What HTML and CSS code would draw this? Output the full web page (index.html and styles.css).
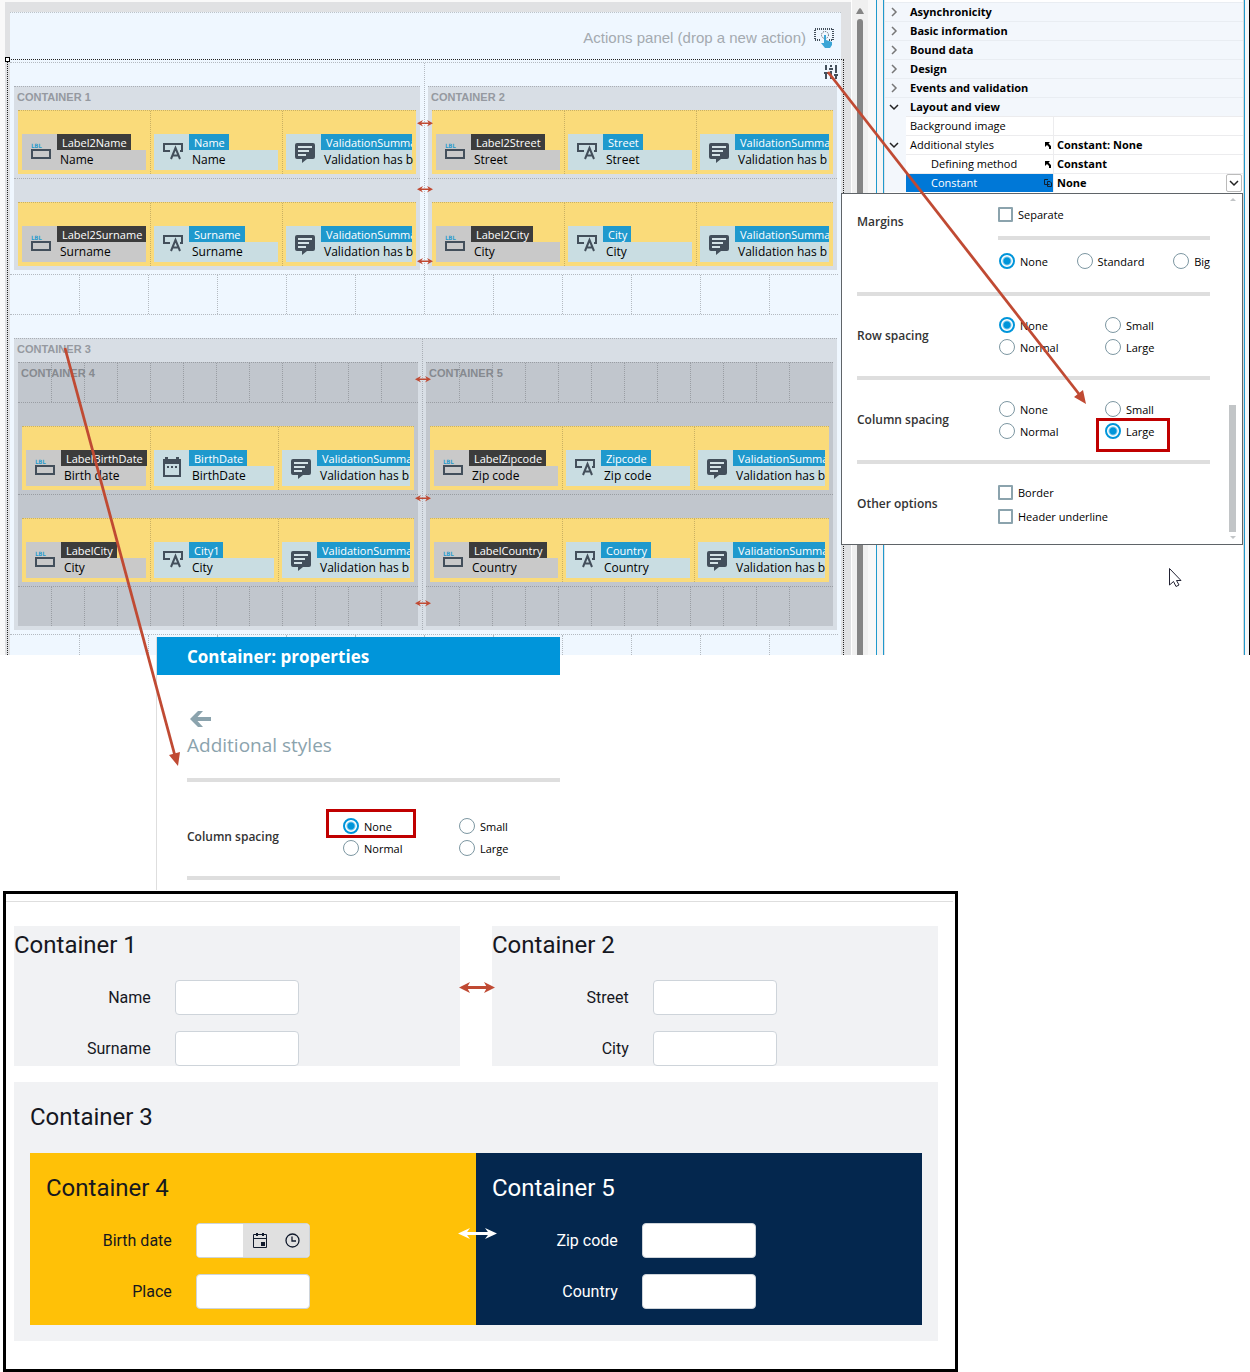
FILE: index.html
```html
<!DOCTYPE html>
<html lang="en">
<head>
<meta charset="utf-8">
<title>Container: column spacing</title>
<link rel="stylesheet" href="styles.css">
</head>
<body>
<svg class="symbols" aria-hidden="true">
  <symbol id="i-label" viewBox="0 0 35 36"><text class="lbl" x="9" y="14">LBL</text><rect x="10" y="16" width="18" height="8" fill="none" stroke="#434f5b" stroke-width="2"/></symbol>
  <symbol id="i-field" viewBox="0 0 35 36"><path d="M16 17H10V10H28V17H26M17 25L21.500 14L26 25M18 21.500H25" fill="none" stroke="#434f5b" stroke-width="2"/></symbol>
  <symbol id="i-message" viewBox="0 0 35 36"><path d="M11 9H27a2 2 0 0 1 2 2V23a2 2 0 0 1-2 2H21L16 29V25H11a2 2 0 0 1-2-2V11a2 2 0 0 1 2-2z" fill="#434f5b"/><path d="M12 13H26M12 17H23M12 21H20" stroke="#d5e3e7" stroke-width="2"/></symbol>
  <symbol id="i-calendar" viewBox="0 0 35 36"><path d="M10 10H26V26H10z" fill="none" stroke="#434f5b" stroke-width="2"/><path d="M9 9H27V14H9zM11 7h3v3h-3zM22 7h3v3h-3z" fill="#434f5b"/><path d="M13 16h2v2h-2zM17 16h2v2h-2zM21 16h2v2h-2z" fill="#434f5b"/></symbol>
  <symbol id="i-right" viewBox="0 0 12 12"><path d="M4 2L8 6L4 10" fill="none" stroke="#777" stroke-width="1.500"/></symbol>
  <symbol id="i-down" viewBox="0 0 12 12"><path d="M2 4L6 8L10 4" fill="none" stroke="#222" stroke-width="1.500"/></symbol>
  <symbol id="i-override" viewBox="0 0 8 8"><path d="M1 1H6L4.500 2.500L7 5V8H5V6L3 4L1 6z" fill="#000"/></symbol>
</svg>

<main class="page">
<div class="workspace">
  <section class="designer">
    <div class="canvas">
      <div class="actions">
        <span>Actions panel (drop a new action)</span>
        <svg width="20" height="20" viewBox="0 0 20 20"><path d="M6 12H1V1H19V12H14" fill="none" stroke="#434f5b" stroke-width="2" stroke-dasharray="1 1"/><circle cx="11" cy="7" r="3.500" fill="none" stroke="#434f5b" stroke-dasharray="1 1"/><path d="M10 7h2v5l6 2v3l-2 3h-5l-4-5h3z" fill="#3aa5d6"/></svg>
      </div>

      <div class="row split">
        <div class="cell">
          <section class="container">
            <h2 class="container-title">Container 1</h2>
            <div class="line"><div class="band">
              <div class="slot"><div class="widget label"><svg><use href="#i-label"/></svg><span class="tag">Label2Name</span><span class="text">Name</span></div></div>
              <div class="slot"><div class="widget"><svg><use href="#i-field"/></svg><span class="tag">Name</span><span class="text">Name</span></div></div>
              <div class="slot"><div class="widget full"><svg><use href="#i-message"/></svg><span class="tag">ValidationSumma</span><span class="text">Validation has b</span></div></div>
            </div></div>
            <div class="line"><div class="band">
              <div class="slot"><div class="widget label"><svg><use href="#i-label"/></svg><span class="tag">Label2Surname</span><span class="text">Surname</span></div></div>
              <div class="slot"><div class="widget"><svg><use href="#i-field"/></svg><span class="tag">Surname</span><span class="text">Surname</span></div></div>
              <div class="slot"><div class="widget full"><svg><use href="#i-message"/></svg><span class="tag">ValidationSumma</span><span class="text">Validation has b</span></div></div>
            </div></div>
          </section>
        </div>
        <div class="cell">
          <section class="container">
            <h2 class="container-title">Container 2</h2>
            <div class="line"><div class="band">
              <div class="slot"><div class="widget label"><svg><use href="#i-label"/></svg><span class="tag">Label2Street</span><span class="text">Street</span></div></div>
              <div class="slot"><div class="widget"><svg><use href="#i-field"/></svg><span class="tag">Street</span><span class="text">Street</span></div></div>
              <div class="slot"><div class="widget full"><svg><use href="#i-message"/></svg><span class="tag">ValidationSumma</span><span class="text">Validation has b</span></div></div>
            </div></div>
            <div class="line"><div class="band">
              <div class="slot"><div class="widget label"><svg><use href="#i-label"/></svg><span class="tag">Label2City</span><span class="text">City</span></div></div>
              <div class="slot"><div class="widget"><svg><use href="#i-field"/></svg><span class="tag">City</span><span class="text">City</span></div></div>
              <div class="slot"><div class="widget full"><svg><use href="#i-message"/></svg><span class="tag">ValidationSumma</span><span class="text">Validation has b</span></div></div>
            </div></div>
          </section>
        </div>
        <svg class="sliders" width="14" height="14" viewBox="0 0 14 14"><path d="M2 0V5M2 7V14M7 0V2M7 6V14M12 0V8M12 11V14M0 8H4M5 4H9M10 10H14" stroke="#434f5b" stroke-width="2"/></svg>
      </div>

      <div class="row empty"><i></i><i></i><i></i><i></i><i></i><i></i><i></i><i></i><i></i><i></i><i></i><i></i></div>

      <div class="row">
        <div class="cell wide">
          <section class="container">
            <h2 class="container-title">Container 3</h2>
            <div class="nest">
              <div class="nest-cell">
                <section class="container dark">
                  <h3 class="container-title">Container 4</h3>
                  <div class="line ticks"><i></i><i></i><i></i><i></i><i></i><i></i><i></i><i></i><i></i><i></i><i></i><i></i></div>
                  <div class="line"><div class="band narrow">
                    <div class="slot"><div class="widget label"><svg><use href="#i-label"/></svg><span class="tag">LabelBirthDate</span><span class="text">Birth date</span></div></div>
                    <div class="slot"><div class="widget"><svg><use href="#i-calendar"/></svg><span class="tag">BirthDate</span><span class="text">BirthDate</span></div></div>
                    <div class="slot"><div class="widget full"><svg><use href="#i-message"/></svg><span class="tag">ValidationSumma</span><span class="text">Validation has b</span></div></div>
                  </div></div>
                  <div class="line"><div class="band narrow">
                    <div class="slot"><div class="widget label"><svg><use href="#i-label"/></svg><span class="tag">LabelCity</span><span class="text">City</span></div></div>
                    <div class="slot"><div class="widget"><svg><use href="#i-field"/></svg><span class="tag">City1</span><span class="text">City</span></div></div>
                    <div class="slot"><div class="widget full"><svg><use href="#i-message"/></svg><span class="tag">ValidationSumma</span><span class="text">Validation has b</span></div></div>
                  </div></div>
                  <div class="line ticks"><i></i><i></i><i></i><i></i><i></i><i></i><i></i><i></i><i></i><i></i><i></i><i></i></div>
                </section>
              </div>
              <div class="nest-cell">
                <section class="container dark">
                  <h3 class="container-title">Container 5</h3>
                  <div class="line ticks"><i></i><i></i><i></i><i></i><i></i><i></i><i></i><i></i><i></i><i></i><i></i><i></i></div>
                  <div class="line"><div class="band">
                    <div class="slot"><div class="widget label"><svg><use href="#i-label"/></svg><span class="tag">LabelZipcode</span><span class="text">Zip code</span></div></div>
                    <div class="slot"><div class="widget"><svg><use href="#i-field"/></svg><span class="tag">Zipcode</span><span class="text">Zip code</span></div></div>
                    <div class="slot"><div class="widget full"><svg><use href="#i-message"/></svg><span class="tag">ValidationSumma</span><span class="text">Validation has b</span></div></div>
                  </div></div>
                  <div class="line"><div class="band">
                    <div class="slot"><div class="widget label"><svg><use href="#i-label"/></svg><span class="tag">LabelCountry</span><span class="text">Country</span></div></div>
                    <div class="slot"><div class="widget"><svg><use href="#i-field"/></svg><span class="tag">Country</span><span class="text">Country</span></div></div>
                    <div class="slot"><div class="widget full"><svg><use href="#i-message"/></svg><span class="tag">ValidationSumma</span><span class="text">Validation has b</span></div></div>
                  </div></div>
                  <div class="line ticks"><i></i><i></i><i></i><i></i><i></i><i></i><i></i><i></i><i></i><i></i><i></i><i></i></div>
                </section>
              </div>
            </div>
          </section>
        </div>
      </div>

      <div class="row empty last"><i></i><i></i><i></i><i></i><i></i><i></i><i></i><i></i><i></i><i></i><i></i><i></i></div>
    </div>
    <div class="selection"></div>
  </section>

  <div class="scroll"><svg width="10" height="6" viewBox="0 0 10 6"><path d="M5 0Q6 0 9 6H1Q4 0 5 0z" fill="#858585"/></svg><div class="thumb"></div></div>
  <div class="splitter"></div>

  <aside class="inspector">
    <table class="props">
      <colgroup><col class="col-gutter"><col class="col-name"><col></colgroup>
      <tbody>
        <tr class="group"><td><button aria-label="Expand"><svg><use href="#i-right"/></svg></button></td><th colspan="2">Asynchronicity</th></tr>
        <tr class="group"><td><button aria-label="Expand"><svg><use href="#i-right"/></svg></button></td><th colspan="2">Basic information</th></tr>
        <tr class="group"><td><button aria-label="Expand"><svg><use href="#i-right"/></svg></button></td><th colspan="2">Bound data</th></tr>
        <tr class="group"><td><button aria-label="Expand"><svg><use href="#i-right"/></svg></button></td><th colspan="2">Design</th></tr>
        <tr class="group"><td><button aria-label="Expand"><svg><use href="#i-right"/></svg></button></td><th colspan="2">Events and validation</th></tr>
        <tr class="group"><td><button aria-label="Collapse"><svg><use href="#i-down"/></svg></button></td><th colspan="2">Layout and view</th></tr>
        <tr><td></td><th>Background image</th><td></td></tr>
        <tr><td><button aria-label="Collapse"><svg><use href="#i-down"/></svg></button></td><th><span class="name">Additional styles<svg><use href="#i-override"/></svg></span></th><td>Constant: None</td></tr>
        <tr><td></td><th><span class="name sub">Defining method<svg><use href="#i-override"/></svg></span></th><td>Constant</td></tr>
        <tr class="current"><td></td><th><span class="name sub">Constant<svg viewBox="0 0 8 8"><path d="M5.500 5.500H.5V.5H4M3.500 2.500H6L7.500 4V7.500H3.500z" fill="none" stroke="#123"/></svg></span></th><td><span class="value">None<button class="drop" aria-label="Open"><svg><use href="#i-down"/></svg></button></span></td></tr>
      </tbody>
    </table>

    <form class="popup">
      <div class="options">
        <div class="option margins">
          <span class="option-name">Margins</span>
          <div class="option-body">
            <label class="choice"><input type="checkbox">Separate</label>
            <hr>
            <div class="spread">
              <label class="choice"><input type="radio" name="m" checked>None</label>
              <label class="choice"><input type="radio" name="m">Standard</label>
              <label class="choice"><input type="radio" name="m">Big</label>
            </div>
          </div>
        </div>
        <div class="option">
          <span class="option-name">Row spacing</span>
          <div class="pairs">
            <label class="choice"><input type="radio" name="r" checked>None</label>
            <label class="choice"><input type="radio" name="r">Small</label>
            <label class="choice"><input type="radio" name="r">Normal</label>
            <label class="choice"><input type="radio" name="r">Large</label>
          </div>
        </div>
        <div class="option">
          <span class="option-name">Column spacing</span>
          <div class="pairs">
            <label class="choice"><input type="radio" name="c">None</label>
            <label class="choice"><input type="radio" name="c">Small</label>
            <label class="choice"><input type="radio" name="c">Normal</label>
            <label class="choice marked"><input type="radio" name="c" checked>Large</label>
          </div>
        </div>
        <div class="option">
          <span class="option-name">Other options</span>
          <div class="checks">
            <label class="choice"><input type="checkbox">Border</label>
            <label class="choice"><input type="checkbox">Header underline</label>
          </div>
        </div>
      </div>
      <div class="popup-scroll">
        <svg width="6" height="4" viewBox="0 0 6 4"><path d="M0 3L3 0L6 3z" fill="#c2c5c7"/></svg>
        <div class="popup-thumb"></div>
        <svg width="6" height="4" viewBox="0 0 6 4"><path d="M0 0L3 3L6 0z" fill="#c2c5c7"/></svg>
      </div>
    </form>
  </aside>
  <div class="edge"></div>
</div>

<form class="dialog">
  <h2 class="dialog-title">Container: properties</h2>
  <div class="dialog-body">
    <button type="button" class="back" aria-label="Back"><svg width="21" height="16" viewBox="0 0 21 16"><path d="M0 8L8 0H13L7.500 6H21V10H7.500L13 16H8z" fill="#8ba3ad"/></svg></button>
    <h3 class="dialog-heading">Additional styles</h3>
    <div class="dialog-option">
      <span class="option-name">Column spacing</span>
      <div class="pairs">
        <label class="choice marked"><input type="radio" name="d" checked>None</label>
        <label class="choice"><input type="radio" name="d">Small</label>
        <label class="choice"><input type="radio" name="d">Normal</label>
        <label class="choice"><input type="radio" name="d">Large</label>
      </div>
    </div>
  </div>
</form>

<section class="preview">
  <hr>
  <div class="preview-body">
    <div class="pair">
      <section class="card">
        <h2>Container 1</h2>
        <div class="field"><label for="f1">Name</label><input id="f1" type="text"></div>
        <div class="field"><label for="f2">Surname</label><input id="f2" type="text"></div>
      </section>
      <section class="card">
        <h2>Container 2</h2>
        <div class="field"><label for="f3">Street</label><input id="f3" type="text"></div>
        <div class="field"><label for="f4">City</label><input id="f4" type="text"></div>
      </section>
    </div>
    <section class="card padded">
      <h2>Container 3</h2>
      <div class="joined">
        <section class="card padded yellow">
          <h3>Container 4</h3>
          <div class="field"><label for="f5">Birth date</label>
            <div class="date"><input id="f5" type="text">
              <button type="button" aria-label="Pick date"><svg width="14" height="15" viewBox="0 0 14 15"><path d="M.5 1.500H13.500V14.500H.5zM.5 5.500H13.500" fill="none" stroke="#111a2c"/><path d="M3 0h2v3H3zM9 0h2v3H9zM8 9h4v4H8z" fill="#111a2c"/></svg></button>
              <button type="button" aria-label="Pick time"><svg width="15" height="15" viewBox="0 0 15 15"><circle cx="7.500" cy="7.500" r="6.500" fill="none" stroke="#111a2c" stroke-width="1.300"/><path d="M7 3.500V8H11" fill="none" stroke="#111a2c" stroke-width="1.300"/></svg></button>
            </div></div>
          <div class="field"><label for="f6">Place</label><input id="f6" type="text"></div>
        </section>
        <section class="card padded navy">
          <h3>Container 5</h3>
          <div class="field"><label for="f7">Zip code</label><input id="f7" type="text"></div>
          <div class="field"><label for="f8">Country</label><input id="f8" type="text"></div>
        </section>
      </div>
    </section>
  </div>
</section>

<!-- Callout arrows drawn over the three screens -->
<svg class="callouts" width="1250" height="1372" viewBox="0 0 1250 1372" aria-hidden="true">
  <defs>
    <g id="gap-arrow" fill="#c04a33"><path d="M4 4.500H14V6H4z"/><path d="M1 5.250L7 2L5 5.250L7 8.500zM17 5.250L11 2L13 5.250L11 8.500z"/></g>
  </defs>
  <g stroke="#c04a33" stroke-width="2.800" fill="none"><path d="M828 72L1079 394"/><path d="M65 348L175 756"/></g>
  <path d="M1086 404L1074 397L1083 390zM178 766L169 755L180 752z" fill="#c04a33"/>
  <use href="#gap-arrow" x="416" y="118"/><use href="#gap-arrow" x="416" y="184"/><use href="#gap-arrow" x="416" y="256"/>
  <use href="#gap-arrow" x="414" y="374"/><use href="#gap-arrow" x="414" y="493"/><use href="#gap-arrow" x="414" y="598"/>
  <g fill="#c04a33"><path d="M466 986H488V989H466z"/><path d="M459 987.500L470 982L467 987.500L470 993zM495 987.500L484 982L487 987.500L484 993z"/></g>
  <g fill="#fff"><path d="M465 1232H490V1235H465z"/><path d="M458 1233.500L470 1228L466 1233.500L470 1239zM497 1233.500L485 1228L489 1233.500L485 1239z"/></g>
  <path d="M1169.500 568.500V585L1173.500 581.500L1176 586.500L1179 585L1176.500 580.500H1181z" fill="#fff" stroke="#223"/>
</svg>
</main>
</body>
</html>
```
FILE: styles.css
```css
*, *::before, *::after { box-sizing: border-box; }

body {
  margin: 0;
  background: #fff;
  color: #000;
  font-family: "Open Sans", "Noto Sans", sans-serif;
  font-size: 11px;
}

h2, h3 { margin: 0; }
hr { margin: 0; border: 0; }
button { padding: 0; border: 0; background: none; }
.symbols { display: none; }
.lbl { font: bold 6px "DejaVu Sans Mono", monospace; fill: #1f99cd; }
.page { position: relative; }

/* Designer */
.workspace { display: flex; }

.designer {
  position: relative;
  flex: 1;
  min-width: 0;
  border-top: 2px solid #f9f9f9;
  border-left: 5px solid #f9f9f9;
  padding: 10px 10px 0 5px;
  background: #e0e1e3;
}

.canvas { background: #eff7ff; }

.actions {
  display: flex;
  align-items: center;
  justify-content: flex-end;
  gap: 8px;
  height: 50px;
  padding-right: 7px;
  border-top: 1px dotted #bcc3c9;
  color: #a4aab0;
  font: 15px "Liberation Sans", sans-serif;
}

.row {
  position: relative;
  display: grid;
  margin-right: 3px;
  border-top: 1px dotted #b4bac1;
}

.split { grid-template-columns: 1fr 1fr; }
.empty { grid-template-columns: repeat(12, 1fr); min-height: 40px; }
.last { min-height: 21px; }
.empty i + i { border-left: 1px dotted #b4bac1; }

.cell { padding: 23px 4px 4px; min-width: 0; }
.cell + .cell { padding: 23px 1px 4px 3px; border-left: 1px dotted #b4bac1; }
.cell.wide { padding-right: 1px; }
.sliders { position: absolute; top: 2px; right: 0; }

.container { position: relative; background: #d8dee5; }
.container.dark { background: #c1c6cd; }

.container-title {
  position: absolute;
  top: 0;
  left: 3px;
  color: #9599a0;
  font: bold 11px/22px "Liberation Sans", sans-serif;
  text-transform: uppercase;
}

.dark .container-title { color: #868a90; }

.line { padding: 23px 4px 4px; border-top: 1px dotted #a9aeb5; }
.dark .line { border-color: #999da3; }

.line.ticks {
  display: grid;
  grid-template-columns: repeat(12, 1fr);
  min-height: 40px;
  padding: 0 4px 0 0;
}

.nest-cell + .nest-cell .ticks { padding-right: 11px; }
.ticks i + i { border-left: 1px dotted #999da3; }

.band {
  display: grid;
  grid-template-columns: 132px 132px minmax(0, 1fr);
  background: #fadb7a;
  border-top: 1px dotted #c9b063;
}

.band.narrow { grid-template-columns: 128px 128px minmax(0, 1fr); }
.slot { padding: 23px 4px 4px; }
.slot + .slot { padding-left: 3px; border-left: 1px dotted #c9b063; }

.widget {
  display: grid;
  grid-template: 16px 20px / 35px minmax(0, 1fr);
  white-space: nowrap;
}

.widget svg { grid-row: span 2; width: 35px; height: 36px; background: #c9dde2; }

.tag {
  justify-self: start;
  padding: 1px 4px 0 5px;
  background: #1f99cd;
  color: #fff;
  line-height: 15px;
}

.full .tag { justify-self: stretch; padding-right: 0; overflow: hidden; }
.text { padding-left: 3px; background: #c9dde2; font-size: 12px; line-height: 19px; }
.widget.label svg, .label .text { background: #c9c9c9; }
.label .tag { background: #3c3c3c; }

.nest {
  display: grid;
  grid-template-columns: 408fr 415fr;
  padding-top: 23px;
  border-top: 1px dotted #a9aeb5;
  background: linear-gradient(#a9aeb5 50%, transparent 50%) 408px 0 / 1px 2px repeat-y;
}

.nest-cell { padding: 0 4px 4px; min-width: 0; }

.selection {
  position: absolute;
  inset: 57px 7px 0 2px;
  border: 1px dotted #222;
  border-bottom: 0;
}

.selection::before {
  content: "";
  position: absolute;
  top: -3px;
  left: -3px;
  width: 5px;
  height: 5px;
  border: 1px solid #000;
  background: #fff;
}

.scroll {
  display: flex;
  flex-direction: column;
  align-items: center;
  gap: 5px;
  width: 17px;
  padding-top: 8px;
  background: #f0f0f0;
  border-left: 1px solid #fff;
}

.thumb { flex: 1; width: 6px; border-radius: 3px 3px 0 0; background: #858585; }

.splitter {
  width: 16px;
  background: linear-gradient(90deg, #f8f8f8 8px, #1f99cd 8px 9px, #f5f5f5 9px 15px, #1f99cd 15px);
}

.edge {
  width: 7px;
  background: linear-gradient(90deg, #d8d8d8 1px, #1f99cd 1px 2px, #f5f7f9 2px 6px, #000 6px);
}

/* Property inspector */
.inspector { position: relative; width: 359px; padding-top: 2px; border-left: 1px solid #dfe3e8; }

.props { width: 100%; border-spacing: 0; table-layout: fixed; line-height: 18px; }
.col-gutter { width: 21px; }
.col-name { width: 147px; }
.props td, .props th { height: 19px; padding: 0; border-top: 1px solid #ececee; text-align: left; font-weight: 400; }
.props td:first-child { background: #f3f7fc; border-color: #f3f7fc; }
.props th { padding-left: 4px; }
.props td:last-child { padding-left: 3px; border-left: 1px solid #ececee; font-weight: 700; }
.props .group th { background: #f3f7fc; font-weight: 700; border-color: #e9edf2; }
.props .group td:first-child { border-color: #e9edf2; }
.props button { display: block; margin-left: 3px; }
.props button svg { display: block; width: 12px; height: 12px; }
.name { display: flex; align-items: center; justify-content: space-between; padding-right: 1px; }
.name svg { width: 8px; height: 8px; }
.name.sub { padding-left: 21px; }
.props .current th { background: #0078d7; color: #fff; }
.value { display: flex; justify-content: space-between; }
.props .drop { display: grid; place-items: center; width: 16px; height: 18px; margin-right: 1px; border: 1px solid #bbb; border-radius: 2px; background: #fff; }

.popup {
  position: absolute;
  top: 193px;
  left: -44px;
  right: 0;
  display: flex;
  border: 1px solid #5f6468;
  background: #fff;
}

.options { flex: 1; padding-left: 15px; }
.option { display: grid; grid-template-columns: 141px 1fr; align-items: center; min-height: 80px; }
.option + .option { border-top: 4px solid #dedede; min-height: 84px; }
.option-name { color: #333; font-size: 12px; font-weight: 600; line-height: 18px; }
.margins { min-height: 98px; align-items: start; }
.margins .option-name { padding-top: 19px; }
.option-body { padding-top: 10px; }
.option-body hr { height: 4px; margin: 10px 0 11px; background: #dedede; }
.spread { display: flex; justify-content: space-between; padding-left: 1px; }
.pairs { display: grid; grid-template-columns: 106px 1fr; padding: 2px 0 0 1px; }
.checks { display: grid; gap: 2px; padding-top: 2px; }

.choice { position: relative; display: flex; align-items: center; justify-self: start; gap: 5px; line-height: 22px; }
.choice input { flex: none; appearance: none; width: 16px; height: 16px; margin: 0 0 2px; border: 2px solid #8ba3ad; background: #fff; }
.choice input[type="checkbox"] { width: 15px; height: 15px; border-radius: 1px; }
.choice input[type="radio"] { border-radius: 50%; border-width: 1px; border-color: #7d97a2; }
.choice input[type="radio"]:checked { border: 2px solid #0095da; background: radial-gradient(circle, #0095da 3px, #fff 5px); }

.marked::after {
  content: "";
  position: absolute;
  top: -3px;
  left: -9px;
  width: 74px;
  height: 34px;
  border: 3px solid #c00000;
}

.popup-scroll { display: flex; flex-direction: column; align-items: center; width: 32px; padding: 4px 0 4px 13px; }
.popup-thumb { width: 7px; height: 127px; margin: auto 0 4px; background: #c2c5c7; }

/* Container properties dialog */
.dialog {
  position: relative;
  width: 404px;
  margin: -18px 0 1px 156px;
  border-left: 1px solid #dedede;
  background: #fff;
}

.dialog-title { padding: 2px 0 0 30px; background: #0095da; color: #fff; font-size: 17px; font-weight: 700; line-height: 36px; }
.dialog-body { padding: 36px 0 10px 30px; }
.back { display: block; margin-left: 3px; height: 16px; }
.dialog-heading { padding: 2px 0 16px; color: #8ba3ad; font-size: 19px; font-weight: 400; line-height: 33px; }

.dialog-option {
  display: grid;
  grid-template-columns: 155px 1fr;
  align-items: center;
  padding: 32px 0 16px;
  border: solid #dedede;
  border-width: 4px 0;
}

.dialog .pairs { grid-template-columns: 116px 1fr; }
.dialog .marked::after { top: -7px; left: -17px; width: 90px; height: 29px; }

/* Rendered form */
.preview { width: 76.4%; margin-left: 3px; border: 3px solid #000; font-family: Roboto, sans-serif; font-size: 16px; color: #16181f; }
.preview hr { position: relative; height: 1px; margin: 7px 2px 24px 0; background: #dedede; }
.preview hr::before { content: ""; position: absolute; left: -6px; width: 3px; height: 1px; background: #dedede; }
.preview-body { display: grid; gap: 16px; padding: 0 17px 28px 8px; }
.pair { display: grid; grid-template-columns: 1fr 1fr; gap: 32px; }
.joined { display: grid; grid-template-columns: 1fr 1fr; }
.card { background: #f1f2f4; }
.card.padded { padding: 16px; }
.card h2, .card h3 { margin-bottom: 16px; font-size: 24px; font-weight: 400; line-height: 38px; }
.padded > h2 { margin-bottom: 17px; }
.card.yellow { background: #ffc107; }
.card.navy { background: #04274e; color: #fff; }
.field { display: grid; grid-template-columns: 11fr minmax(0, 10fr) 11fr; gap: 24px; align-items: center; }
.field + .field { margin-top: 16px; }
.field label { text-align: right; }
.field > input, .date { width: 100%; height: 35px; border: 1px solid #ced4da; border-radius: 4px; background: #fff; }
.date { display: flex; overflow: hidden; }
.date input { width: 0; flex: 1; border: 0; background: #fff; }
.date button { display: grid; place-items: center; width: 33px; background: #e0e0e0; }

.callouts { position: absolute; top: 0; left: 0; pointer-events: none; }
```
